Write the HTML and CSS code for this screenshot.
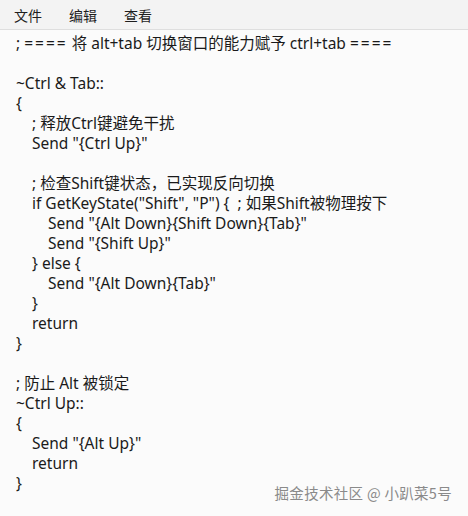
FILE: index.html
```html
<!DOCTYPE html>
<html lang="zh">
<head>
<meta charset="utf-8">
<link rel="stylesheet" href="styles.css">
</head>
<body>
<div class="window">
  <nav class="menubar">
    <span class="menu-item">文件</span>
    <span class="menu-item">编辑</span>
    <span class="menu-item">查看</span>
  </nav>
  <div class="editor">
    <div class="line">; <span class="rule">====</span> 将 alt+tab 切换窗口的能力赋予 ctrl+tab <span class="rule">====</span></div>
    <div class="line"></div>
    <div class="line">~Ctrl &amp; Tab::</div>
    <div class="line">{</div>
    <div class="line l1">; 释放Ctrl键避免干扰</div>
    <div class="line l1">Send "{Ctrl Up}"</div>
    <div class="line"></div>
    <div class="line l1">; 检查Shift键状态，已实现反向切换</div>
    <div class="line l1">if GetKeyState("Shift", "P") {  ; 如果Shift被物理按下</div>
    <div class="line l2">Send "{Alt Down}{Shift Down}{Tab}"</div>
    <div class="line l2">Send "{Shift Up}"</div>
    <div class="line l1">} else {</div>
    <div class="line l2">Send "{Alt Down}{Tab}"</div>
    <div class="line l1">}</div>
    <div class="line l1">return</div>
    <div class="line">}</div>
    <div class="line"></div>
    <div class="line">; 防止 Alt 被锁定</div>
    <div class="line">~Ctrl Up::</div>
    <div class="line">{</div>
    <div class="line l1">Send "{Alt Up}"</div>
    <div class="line l1">return</div>
    <div class="line">}</div>
  </div>
  <div class="watermark">掘金技术社区 @ 小趴菜5号</div>
</div>
</body>
</html>
```
FILE: styles.css
```css
html, body {
  margin: 0;
  padding: 0;
  background: #fbfbfb;
}
.window {
  width: 468px;
  height: 516px;
  overflow: hidden;
  position: relative;
  font-family: "Noto Sans CJK SC", "Open Sans", sans-serif;
  color: #1a1a1a;
}
.menubar {
  height: 30px;
  box-sizing: border-box;
  background: #f3f3f3;
  border-bottom: 1px solid #dedede;
  display: flex;
  align-items: center;
  gap: 27px;
  padding-left: 14px;
  font-size: 14px;
  color: #1e1e1e;
}
.editor {
  padding: 3px 0 0 16px;
  font-size: 15.5px;
  font-family: "Noto Sans", "Noto Sans CJK SC", sans-serif;
}
.line {
  height: 20px;
  line-height: 20px;
  white-space: pre;
}
.rule {
  letter-spacing: 2px;
}
.l1 { padding-left: 16px; }
.l2 { padding-left: 32px; }
.watermark {
  position: absolute;
  right: 16px;
  bottom: 13px;
  font-size: 14.5px;
  color: #8a8a8a;
  letter-spacing: 0.3px;
}
```
